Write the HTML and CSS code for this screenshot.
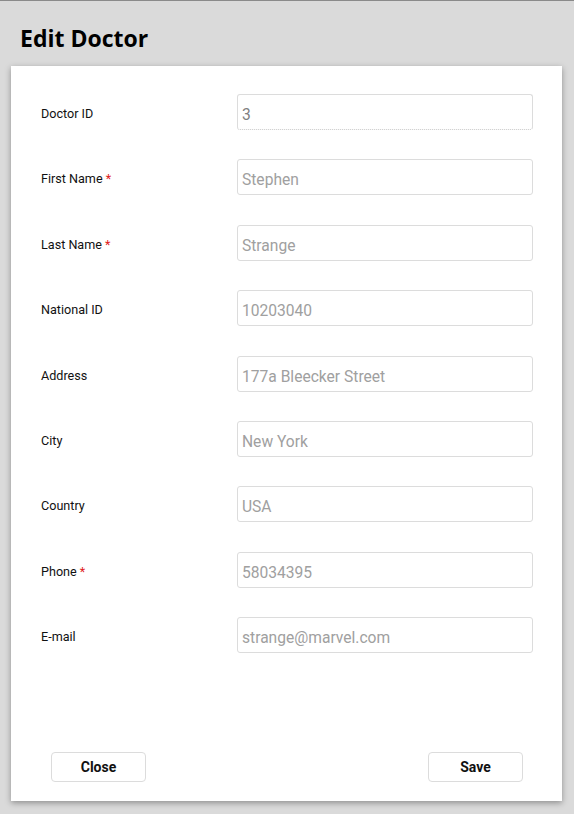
FILE: index.html
```html
<!DOCTYPE html>
<html>
<head>
<meta charset="utf-8">
<link rel="stylesheet" href="styles.css">
</head>
<body>
<div class="page">
  <header class="header"><h1 class="title">Edit Doctor</h1></header>
  <div class="card">
    <form class="form">
      <label class="label">Doctor ID</label>
      <div class="input input-disabled">3</div>
      <label class="label">First Name <span class="req">*</span></label>
      <div class="input">Stephen</div>
      <label class="label">Last Name <span class="req">*</span></label>
      <div class="input">Strange</div>
      <label class="label">National ID</label>
      <div class="input">10203040</div>
      <label class="label">Address</label>
      <div class="input">177a Bleecker Street</div>
      <label class="label">City</label>
      <div class="input">New York</div>
      <label class="label">Country</label>
      <div class="input">USA</div>
      <label class="label">Phone <span class="req">*</span></label>
      <div class="input">58034395</div>
      <label class="label">E-mail</label>
      <div class="input">strange@marvel.com</div>
    </form>
    <div class="actions">
      <button class="btn" type="button">Close</button>
      <button class="btn" type="button">Save</button>
    </div>
  </div>
</div>
</body>
</html>
```

FILE: styles.css
```css
html, body {
  margin: 0;
  padding: 0;
}
body {
  background: #dadada;
  font-family: Roboto, "Liberation Sans", sans-serif;
  width: 574px;
  height: 814px;
  overflow: hidden;
}
.page {
  border-top: 1px solid #8a8a8a;
  height: 813px;
  box-sizing: border-box;
}
.header {
  height: 65px;
  padding-left: 20px;
  box-sizing: border-box;
}
.title {
  margin: 0;
  padding-top: 23px;
  font-family: "Open Sans", sans-serif;
  font-weight: 700;
  font-size: 23px;
  line-height: 28px;
  color: #000;
}
.card {
  margin-left: 11px;
  width: 551px;
  height: 735px;
  background: #fff;
  box-shadow: 0 2px 6px rgba(0,0,0,0.35);
  display: flex;
  flex-direction: column;
  box-sizing: border-box;
  padding: 28px 29px 19px 30px;
}
.form {
  display: grid;
  grid-template-columns: 196px 296px;
  grid-auto-rows: 36px;
  row-gap: 29.4px;
  align-items: center;
}
.label {
  font-size: 12.6px;
  color: #111;
  padding-top: 3px;
}
.req {
  color: #e02020;
}
.input {
  height: 36px;
  box-sizing: border-box;
  border: 1px solid #dcdcdc;
  border-radius: 3px;
  padding: 3px 4px 0;
  font-size: 15.6px;
  line-height: 34px;
  color: #a0a0a0;
}
.input-disabled {
  color: #808080;
  border-bottom: 1px dotted #c8c8c8;
}
.actions {
  margin-top: auto;
  display: flex;
  justify-content: space-between;
  padding: 0 10px 0 10px;
}
.btn {
  width: 95px;
  height: 30px;
  background: #fff;
  border: 1px solid #dcdcdc;
  border-radius: 4px;
  font-family: Roboto, sans-serif;
  font-weight: 700;
  font-size: 14px;
  color: #111;
  padding: 0;
}
```
